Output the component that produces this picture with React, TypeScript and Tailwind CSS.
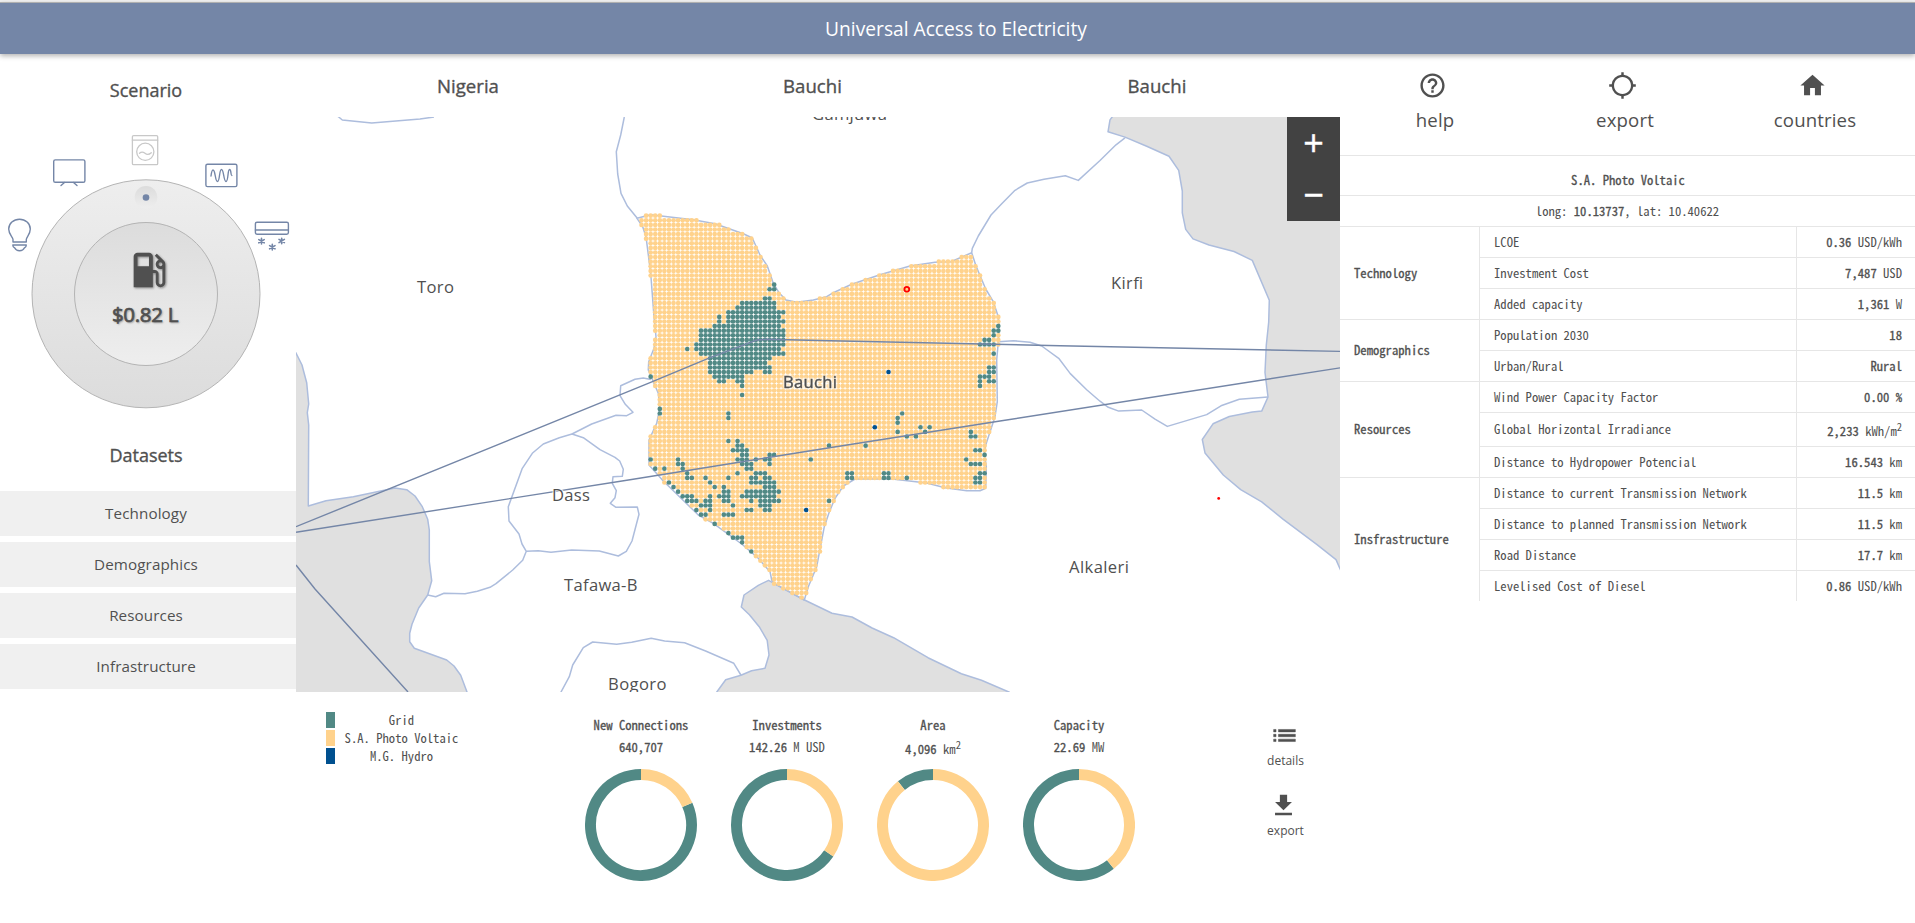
import React from "react";
import { MdHelpOutline, MdLocationSearching, MdHome, MdLocalGasStation } from "react-icons/md";

type Pt = [number, number];

const LEFT_REGION =
  "296,353 302,365 303.3,370 306.7,382.7 308.7,404 307.3,412.7 308.7,425 308.3,506 326,500.7 353.3,496.7 395,488 406.7,489.7 415,496 422.3,506.7 427.7,519.3 429.3,530 429.3,561.7 431.7,580.7 427.7,595 418.7,608 412,624.3 409.7,633.3 409.7,641.7 414.3,648.3 446.7,660 454,666 460.7,675.3 467,692 467,700 290,700 290,346";
const BOTTOM_REGION =
  "712,700 716.8,692 725.7,679.7 740.9,675.3 751.6,670.7 765,668.3 769,655 767.2,640.3 759.2,626.7 749.4,614.7 741.3,607 744,595 758.3,585.3 768.6,580.3 774,583.3 803,599.3 832,613.3 852,617 872.1,628 893.6,637.7 928,657.7 961.4,673.7 981.5,680.3 1008.8,692 1022,700";
const RIGHT_REGION =
  "1112.3,116.8 1110,119.9 1108,131.8 1125,137.1 1146.7,146.3 1169,156.3 1178.7,170.4 1182.3,191 1182.3,212.9 1185.7,229.4 1193,238.9 1209,245 1234,251.5 1252.3,260.4 1269.3,300.2 1268.7,322 1266.3,345 1265,372.5 1268,397 1261.7,411.1 1252.3,411.9 1229.3,416.5 1213,423.8 1202.3,439.5 1205,452.9 1223.3,475 1240.7,489.6 1261.7,501.8 1283.3,519.4 1316.7,544.3 1336,559.6 1340,568.8 1350,590 1350,105 1120,105";

const BORDERS = [
  "427.7,595 435.7,596.7 444,593.3 465,593.7 477.3,591.3 490,587.3 496,583.7 512.7,570 522.7,560.3 526.3,551.3 522,544 519,534 509,521 508.3,506.7 522.3,468.3 532.3,453.3 543.3,444 559.3,437.7 572,434 583.3,437.7 600,449.7 615,457.3 619.7,461 623.3,469.3 622.3,476.3 613,476.7 612.3,483.3 616.3,490.7 615,497.7 610.3,503.3 616,507.3 637.3,507 639,514.3 632,541 626.3,551.3 618.3,556 599.3,551 571.7,550 551,552.3 538.3,550.7 526.3,551.3",
  "572,434 591.7,424 616,415.3 626.7,415.7 633,412.3 625.3,404.3 620,395.7 620.7,385.7 635,379.3 643.3,378 651,379.5",
  "558,700 561,692 569.3,676.7 572.7,665 583.3,647.7 592.7,642 616.7,644.3 631.7,642.3 651.2,638.3 664.6,641 684.6,642.7 705.6,651 733.8,663.3 740.9,675",
  "336,115 338.7,117 342.3,120 371.7,123 420,119 434,117",
  "624.3,117 620.7,135 616.3,151.7 617.7,174 621,193.3 627.3,206 637.3,218.3",
  "971.7,252.7 972.3,248.3 978.3,236 991,215 1001,204.5 1015,190.3 1027.3,183 1044,179.2 1065.3,175.8 1078.3,180.4 1100,160.5 1116,144.8 1125,137.9",
  "998.3,341.7 1013.3,340.7 1030,342.2 1041.7,346 1058.7,358.3 1070.3,373.6 1086.7,389.7 1100,401.2 1108.3,407.3 1118.7,411.1 1141.7,410 1155,419.2 1167.3,426.4 1206.7,414.6 1221,405.8 1239.3,399.3 1268,397",
];

const GRID_LINES = [
  "296,526.7 650,382.7 708.3,358.3 756.7,340 766.7,339.3 830,340.7 1060,345.7 1340,351.4",
  "296,532.3 630,479.7 820,449.3 1000,421 1340,367.9",
  "296,565 315,589 408,692",
];

const BAUCHI: Pt[] = [
  [637, 218.3], [650.7, 214.7], [693.3, 219.7], [715, 223.7], [743.3, 233.7], [752.3, 238], [760, 255],
  [767.3, 266], [773.3, 283.3], [779, 292.7], [786, 300], [796.7, 302.3], [813.3, 300], [826.7, 296.7],
  [833.3, 292.7], [851.7, 284.3], [880, 274.7], [910, 266], [935, 262.3], [951, 261.7], [971.7, 252.7],
  [976, 266], [985.7, 289], [993.3, 301.7], [997.7, 315], [999, 323.3], [998.3, 341.7], [996.7, 360],
  [997.3, 401.7], [995, 416.7], [985.7, 445], [984.3, 453.3], [986.3, 466.7], [985.7, 488.3], [980, 490.7],
  [966.7, 490.7], [945, 487.7], [926.7, 483], [890, 478.7], [855, 479], [843.3, 486], [835, 498.3],
  [829, 512.7], [824.3, 526.7], [816.7, 566.7], [808.3, 586.7], [804.3, 600], [774, 583.3], [771.7, 580],
  [770, 571.7], [758.3, 558.3], [741.7, 544], [713.3, 523.3], [698.3, 515], [663.3, 481], [649, 465],
  [649, 440], [656.7, 423.3], [659.7, 408.3], [659.3, 403.3], [658.3, 393.3], [653.3, 381.7], [648.3, 370],
  [648.7, 361.7], [654, 348.3], [656, 336.7], [654, 316.7], [650.7, 273.3], [646, 236.7], [642.7, 226.7],
];

// Grid-connected cells: row -> inclusive [from, to] column spans.
const GRID_CELLS: Record<number, Pt[]> = {
  15: [[27, 27]],
  16: [[26, 27]],
  18: [[25, 26]],
  19: [[20, 27]],
  20: [[19, 27]],
  21: [[17, 29]],
  22: [[15, 15], [17, 28]],
  23: [[15, 15], [17, 29]],
  24: [[14, 28], [76, 76]],
  25: [[11, 29], [75, 76]],
  26: [[11, 29], [75, 75]],
  27: [[11, 29], [73, 74]],
  28: [[10, 29], [72, 75]],
  29: [[8, 8], [10, 28]],
  30: [[11, 29], [75, 75]],
  31: [[13, 26]],
  32: [[13, 25]],
  33: [[13, 26], [74, 75]],
  34: [[13, 22], [25, 26], [74, 75]],
  35: [[0, 0], [14, 20], [72, 74]],
  36: [[15, 16], [19, 20], [72, 72], [74, 75]],
  37: [[20, 20], [72, 72]],
  39: [[20, 20]],
  42: [[2, 2]],
  43: [[2, 2], [17, 17], [55, 55]],
  44: [[17, 17], [54, 54]],
  45: [[54, 54]],
  46: [[59, 59], [61, 61]],
  47: [[54, 54], [60, 60], [70, 70]],
  48: [[56, 56], [58, 58], [70, 71]],
  49: [[17, 17], [19, 19]],
  50: [[19, 20], [39, 39], [47, 47]],
  51: [[18, 21], [71, 72]],
  52: [[20, 21], [26, 27], [73, 73]],
  53: [[0, 0], [6, 6], [19, 21], [23, 23], [25, 26], [35, 35], [69, 69]],
  54: [[6, 7], [20, 22], [26, 26], [70, 72]],
  55: [[1, 1], [3, 3], [7, 7], [21, 22]],
  56: [[8, 8], [19, 19], [23, 25], [43, 44], [51, 52], [72, 73]],
  57: [[8, 9], [12, 12], [17, 17], [22, 23], [25, 26], [43, 44], [51, 52], [56, 56], [71, 72]],
  58: [[4, 4], [13, 13], [22, 27], [71, 72]],
  59: [[5, 5], [14, 14], [16, 16], [25, 27]],
  60: [[6, 6], [16, 17], [21, 28]],
  61: [[7, 9], [13, 13], [15, 17], [20, 27]],
  62: [[8, 10], [12, 13], [16, 17], [22, 22], [24, 28], [39, 39]],
  63: [[11, 13], [18, 18], [24, 26]],
  64: [[10, 10], [13, 13], [21, 22], [25, 26]],
  65: [[11, 12], [16, 18]],
  67: [[14, 14]],
  69: [[17, 17]],
  70: [[18, 20]],
  71: [[20, 20]],
  73: [[22, 22]],
};
const HYDRO_CELLS = ["52,34", "49,46", "34,64"];

function inside(x: number, y: number): boolean {
  let hit = false;
  for (let i = 0, j = BAUCHI.length - 1; i < BAUCHI.length; j = i++) {
    const [xi, yi] = BAUCHI[i];
    const [xj, yj] = BAUCHI[j];
    if (yi > y !== yj > y && x < ((xj - xi) * (y - yi)) / (yj - yi) + xi) hit = !hit;
  }
  return hit;
}

function cellX(k: number) {
  return 650.67 + 4.574 * k;
}
function cellY(r: number) {
  return 215.7 + 4.6 * r;
}

function buildCells() {
  const cells: { x: number; y: number; fill: string }[] = [];
  for (let r = 0; r <= 83; r++) {
    for (let k = -3; k <= 77; k++) {
      const x = cellX(k);
      const y = cellY(r);
      const grid = (GRID_CELLS[r] || []).some(([a, b]) => k >= a && k <= b);
      const d = 0.5;
      const within =
        inside(x, y) || inside(x - d, y) || inside(x + d, y) || inside(x, y - d) || inside(x, y + d);
      if (!grid && !within) continue;
      const fill = HYDRO_CELLS.includes(`${k},${r}`) ? "#00508f" : grid ? "#518985" : "#ffd28c";
      cells.push({ x, y, fill });
    }
  }
  return cells;
}
const CELLS = buildCells();

const LABELS: { t: string; x: number; y: number; w: number }[] = [
  { t: "Gamjuwa", x: 812, y: 119.5, w: 75 },
  { t: "Toro", x: 417, y: 293, w: 37 },
  { t: "Kirfi", x: 1111, y: 289, w: 32 },
  { t: "Dass", x: 552, y: 501, w: 38 },
  { t: "Tafawa-B", x: 564, y: 591, w: 73.5 },
  { t: "Bogoro", x: 608, y: 690, w: 58.5 },
  { t: "Alkaleri", x: 1069, y: 573, w: 60 },
];

function MapView() {
  return (
    <div className="relative h-[575px] w-[1044px]">
      <svg width="1044" height="575" viewBox="296 117 1044 575" className="block">
        <g fill="#e0e0e0" stroke="#adbddd" strokeWidth="1.5" strokeLinejoin="round">
          <polygon points={LEFT_REGION} />
          <polygon points={BOTTOM_REGION} />
          <polygon points={RIGHT_REGION} />
        </g>
        <g fill="none" stroke="#adbddd" strokeWidth="1.5" strokeLinejoin="round">
          {BORDERS.map((p) => (
            <polyline key={p} points={p} />
          ))}
          <polygon points={BAUCHI.map((p) => p.join(",")).join(" ")} />
        </g>
        {CELLS.map((c) => (
          <circle key={`${c.x}-${c.y}`} cx={c.x} cy={c.y} r="2.35" fill={c.fill} />
        ))}
        <g fill="none" stroke="#7486a7" strokeWidth="1.4">
          {GRID_LINES.map((p) => (
            <polyline key={p} points={p} />
          ))}
        </g>
        <circle cx={cellX(56)} cy={cellY(16)} r="2.4" fill="#ffd28c" stroke="#f00" strokeWidth="1.8" />
        <circle cx="1218.7" cy="498.4" r="1.4" fill="#f00" />
        <g fontFamily="'Open Sans', sans-serif" fontSize="16.6" fill="#505050">
          <g stroke="#fff" strokeOpacity="0.8" strokeWidth="2.4" paintOrder="stroke">
            {LABELS.map((l) => (
              <text key={l.t} x={l.x} y={l.y} textLength={l.w}>
                {l.t}
              </text>
            ))}
          </g>
          <text
            x="783"
            y="388"
            textLength="54"
            stroke="#505050"
            strokeWidth="0.4"
            className="[filter:drop-shadow(0_0_1px_#fff)_drop-shadow(0_0_1px_#fff)]"
          >
            Bauchi
          </text>
        </g>
      </svg>
      <div className="absolute right-0 top-0 flex h-[104px] w-[53px] flex-col bg-[#424242] text-center text-[36px] text-white [-webkit-text-stroke:0.4px_#fff]">
        <button className="h-[52px] leading-[42px]">+</button>
        <button className="h-[52px] leading-[42px]">−</button>
      </div>
    </div>
  );
}

function Snow({ x, y }: { x: number; y: number }) {
  return (
    <g transform={`translate(${x} ${y})`} strokeWidth="1.6">
      <path d="M0-2.8V2.8M-2.7-1.6L2.7 1.6M-2.7 1.6L2.7-1.6" />
    </g>
  );
}

function Dial() {
  return (
    <svg width="296" height="302" viewBox="0 120 296 302" className="block">
      <defs>
        <linearGradient id="outer" x1="0" y1="0" x2="0" y2="1">
          <stop offset="0" stopColor="#eeeeee" />
          <stop offset="1" stopColor="#dcdcdc" />
        </linearGradient>
        <linearGradient id="inner" x1="0" y1="0" x2="0" y2="1">
          <stop offset="0" stopColor="#dcdcdc" />
          <stop offset="1" stopColor="#eeeeee" />
        </linearGradient>
      </defs>
      <circle cx="146" cy="293.8" r="114" fill="url(#outer)" stroke="#b4b4b4" />
      <circle cx="146" cy="294" r="71.5" fill="url(#inner)" stroke="#b4b4b4" />
      <circle cx="146" cy="197.3" r="11.3" fill="url(#inner)" />
      <circle cx="146" cy="197.5" r="3.3" fill="#7486a7" />
      <g fill="none" stroke="#7486a7" strokeWidth="1.4" strokeLinecap="round" strokeLinejoin="round">
        <path d="M13 242v-2.5c0-2.5-4.3-5-4.3-10.5a10.8 9.8 0 0 1 21.6 0c0 5.5-4 8-4 10.5v2.5zM12.8 245h13.5c0 1.5-.6 2.5-2 3-.8 2-2 2.7-4.7 2.7s-4-.7-4.8-2.7c-1.4-.5-2-1.5-2-3z" />
        <rect x="53.7" y="159.9" width="31.2" height="22.4" rx="1.6" />
        <path d="M64.5 182.5l-3.5 3M73.5 182.5l3.5 3" />
        <rect x="205.9" y="164.2" width="31" height="22.4" rx="1.6" />
        <path d="M211 176c.5-4 1-6 2-6 2.5 0 2 11.5 4.5 11.5s1.5-12 4-12 2 12 4.5 12 1.5-12 3.5-12 1 6 2.3 6" />
        <rect x="255.4" y="222.2" width="33" height="12" rx="1.6" />
        <path d="M255.4 230h33" />
        <Snow x={261.5} y={241.2} />
        <Snow x={272.3} y={247.2} />
        <Snow x={281.7} y={241} />
      </g>
      <g fill="none" stroke="#c8c8c8" strokeWidth="1.3" strokeLinecap="round" strokeLinejoin="round">
        <rect x="132.4" y="135.6" width="25.3" height="29" rx="1.2" />
        <path d="M132.4 140.2h25.3M139.5 153.3c2-2 3.8-1.4 5.5 0s4 1.5 6.3-.6" />
        <circle cx="145.3" cy="151.8" r="8.6" />
      </g>
    </svg>
  );
}

function Sidebar() {
  return (
    <aside className="flex w-[296px] flex-col">
      <h2 className="h-[66px] w-[292px] pt-[22px] text-center text-[18px] leading-[28px] [-webkit-text-stroke:0.35px_#505050]">Scenario</h2>
      <div className="relative">
        <Dial />
        <div className="absolute left-[126px] top-[127px]">
          <MdLocalGasStation size={46} className="drop-shadow-[1px_1px_1px_rgba(0,0,0,0.4)]" />
        </div>
        <div className="absolute left-0 top-[180px] w-[290px] text-center text-[20.5px] leading-[28px] tracking-[-0.3px] [-webkit-text-stroke:0.7px_#505050] [text-shadow:1px_1px_2px_rgba(0,0,0,0.4)]">
          $0.82 L
        </div>
      </div>
      <h2 className="h-[69px] w-[292px] pt-[19px] text-center text-[18px] leading-[28px] [-webkit-text-stroke:0.35px_#505050]">Datasets</h2>
      <nav className="flex flex-col gap-1.5">
        {["Technology", "Demographics", "Resources", "Infrastructure"].map((n) => (
          <button key={n} className="h-[45px] bg-[#f0f0f0] pr-1 text-[15.2px] tracking-[0.1px]">
            {n}
          </button>
        ))}
      </nav>
    </aside>
  );
}

const STATS = [
  { name: "New Connections", value: "640,707", unit: "", angle: 66.5 },
  { name: "Investments", value: "142.26", unit: "M USD", angle: 124.2 },
  { name: "Area", value: "4,096", unit: "km", sup: "2", angle: 321.2 },
  { name: "Capacity", value: "22.69", unit: "MW", angle: 141.5 },
];

function Donut({ angle }: { angle: number }) {
  const a = (angle * Math.PI) / 180;
  const x = 56 + 50.5 * Math.sin(a);
  const y = 56 - 50.5 * Math.cos(a);
  return (
    <svg width="112" height="112" viewBox="0 0 112 112" fill="none" strokeWidth="11">
      <path d={`M${x} ${y}A50.5 50.5 0 ${angle < 180 ? 1 : 0} 1 56 5.5`} stroke="#518985" />
      <path d={`M56 5.5A50.5 50.5 0 ${angle > 180 ? 1 : 0} 1 ${x} ${y}`} stroke="#ffd28c" />
    </svg>
  );
}

const LEGEND = [
  { name: "Grid", color: "bg-[#518985]" },
  { name: "S.A. Photo Voltaic", color: "bg-[#ffd28c]" },
  { name: "M.G. Hydro", color: "bg-[#00508f]" },
];

const MONO = "font-['Noto_Sans_Mono_CJK_SC','Noto_Sans_Mono_CJK_JP','Liberation_Mono',monospace] text-[12.65px]";
const STRONG = "font-normal [-webkit-text-stroke:0.3px_#505050]";

function Summary() {
  return (
    <div className="flex">
      <ul className={`${MONO} ml-[30px] mt-5 flex w-[175px] shrink-0 flex-col gap-0.5`}>
        {LEGEND.map((l) => (
          <li key={l.name} className="flex h-4 items-center">
            <span className={`h-4 w-[9px] ${l.color}`} />
            <span className="-mt-px w-[133px] text-center leading-4">{l.name}</span>
          </li>
        ))}
      </ul>
      <div className="ml-[67px] flex shrink-0">
        {STATS.map((s) => (
          <div key={s.name} className={`${MONO} flex w-[146px] flex-col items-center pt-[24px]`}>
            <div className={`h-[22px] leading-[18px] ${STRONG}`}>{s.name}</div>
            <div className={s.sup ? "h-[31px] pt-0.5 leading-[18px]" : "h-[31px] leading-[18px]"}>
              <b className={STRONG}>{s.value}</b> {s.unit}
              {s.sup && <sup className="text-[10.5px]">{s.sup}</sup>}
            </div>
            <Donut angle={s.angle} />
          </div>
        ))}
      </div>
      <div className="ml-[82px] flex w-[100px] shrink-0 flex-col items-center pl-[3px] pt-[29px]">
        <button className="flex h-[70px] flex-col items-center text-[12px] leading-[18px]">
          <svg width="29" height="29" viewBox="0 0 24 24" fill="currentColor" stroke="currentColor" strokeWidth="0.4" className="-ml-[3px]">
            <path d="M3 13h2v-2H3v2zm0 4h2v-2H3v2zm0-8h2V7H3v2zm4 4h14v-2H7v2zm0 4h14v-2H7v2zM7 7v2h14V7H7z" />
          </svg>
          <span className="mt-[2px]">details</span>
        </button>
        <button className="flex flex-col items-center text-[12px] leading-[18px]">
          <svg width="29" height="29" viewBox="0 0 24 24" fill="currentColor" className="-ml-[3px]">
            <path d="M19 9h-4V3H9v6H5l7 7 7-7zM5 18v2h14v-2H5z" />
          </svg>
          <span className="mt-[2px]">export</span>
        </button>
      </div>
    </div>
  );
}

type Row = { label: string; value: string; unit?: string; sup?: string };
const GROUPS: { name: string; rows: Row[] }[] = [
  {
    name: "Technology",
    rows: [
      { label: "LCOE", value: "0.36", unit: "USD/kWh" },
      { label: "Investment Cost", value: "7,487", unit: "USD" },
      { label: "Added capacity", value: "1,361", unit: "W" },
    ],
  },
  {
    name: "Demographics",
    rows: [
      { label: "Population 2030", value: "18" },
      { label: "Urban/Rural", value: "Rural" },
    ],
  },
  {
    name: "Resources",
    rows: [
      { label: "Wind Power Capacity Factor", value: "0.00 %" },
      { label: "Global Horizontal Irradiance", value: "2,233", unit: "kWh/m", sup: "2" },
      { label: "Distance to Hydropower Potencial", value: "16.543", unit: "km" },
    ],
  },
  {
    name: "Insfrastructure",
    rows: [
      { label: "Distance to current Transmission Network", value: "11.5", unit: "km" },
      { label: "Distance to planned Transmission Network", value: "11.5", unit: "km" },
      { label: "Road Distance", value: "17.7", unit: "km" },
      { label: "Levelised Cost of Diesel", value: "0.86", unit: "USD/kWh" },
    ],
  },
];

const ACTIONS = [
  { name: "help", Icon: MdHelpOutline },
  { name: "export", Icon: MdLocationSearching },
  { name: "countries", Icon: MdHome },
];

function Details() {
  return (
    <aside className="w-[575px]">
      <div className="flex h-[101px] pt-[17px] text-[18.6px] tracking-[0.15px]">
        {ACTIONS.map(({ name, Icon }) => (
          <button key={name} className="flex w-[190px] flex-col items-center">
            <Icon size={29} className="mr-[5px]" />
            <span className="mt-[8px] leading-[24px]">{name}</span>
          </button>
        ))}
      </div>
      <div className={MONO}>
        <div className={`h-10 border-t border-[#e6e6e6] pl-px pt-[14px] text-center leading-[20px] ${STRONG}`}>
          S.A. Photo Voltaic
        </div>
        <div className="h-[31px] border-t border-[#e6e6e6] pt-[5px] text-center leading-[20px]">
          long: <b className={STRONG}>10.13737</b>, lat: 10.40622
        </div>
        {GROUPS.map((g) => (
          <section key={g.name} className="flex">
            <h3 className={`flex w-[139px] items-center border-t border-[#e6e6e6] pb-[2px] pl-[14px] ${STRONG}`}>{g.name}</h3>
            <div className="flex-1">
              {g.rows.map((r) => (
                <div key={r.label} className={r.sup ? "flex h-[34px] leading-[31px]" : "flex h-[31px] leading-[29px]"}>
                  <div className="w-[317px] border-l border-t border-[#e6e6e6] pl-[14px]">{r.label}</div>
                  <div className="flex-1 border-l border-t border-[#e6e6e6] pr-[13px] text-right">
                    <span className={r.sup ? "relative top-[2px]" : ""}>
                      <b className={STRONG}>{r.value}</b>
                      {r.unit && ` ${r.unit}`}
                      {r.sup && <sup className="text-[10.5px]">{r.sup}</sup>}
                    </span>
                  </div>
                </div>
              ))}
            </div>
          </section>
        ))}
      </div>
    </aside>
  );
}

export default function App() {
  return (
    <div className="h-[923px] w-[1915px] overflow-hidden bg-white font-['Open_Sans',sans-serif] text-[#505050]">
      <div className="h-0.5 bg-[#f2f2f2]" />
      <header className="flex h-[52px] items-center justify-center border-t border-[#b0b0b0] bg-[#7486a7] pr-[3px] pt-[2px] text-[19.2px] text-white shadow-[0_2px_5px_rgba(0,0,0,0.3)]">
        Universal Access to Electricity
      </header>
      <main className="flex">
        <Sidebar />
        <section className="w-[1044px]">
          <div className="flex h-[63px] pt-[18px] text-center text-[18.6px] leading-[28px] [-webkit-text-stroke:0.35px_#505050]">
            <h2 className="w-[344px]">Nigeria</h2>
            <h2 className="w-[345px]">Bauchi</h2>
            <h2 className="w-[344px]">Bauchi</h2>
          </div>
          <MapView />
          <Summary />
        </section>
        <Details />
      </main>
    </div>
  );
}
